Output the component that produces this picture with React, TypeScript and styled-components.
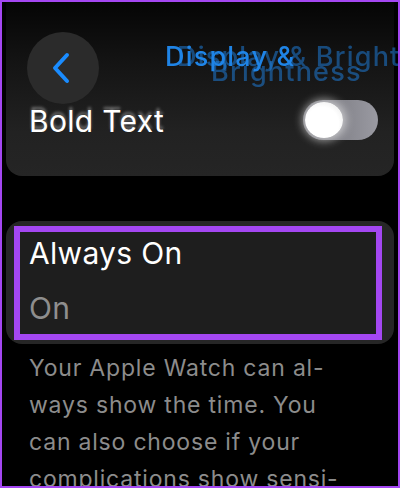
import { createGlobalStyle } from "styled-components"
import styled from "styled-components"

const GlobalStyle = createGlobalStyle`
    html, body {
        margin: 0;
        padding: 0;
        background: #000;
    }
    body {
        font-family: Inter, "Noto Sans", "DejaVu Sans", sans-serif;
    }
`

const Frame = styled.div`
    position: relative;
    box-sizing: border-box;
    width: 400px;
    height: 488px;
    overflow: hidden;
    border: 2px solid #a447f2;
    background: #000;
    display: flex;
    flex-direction: column;
    padding: 0 4px;
`

const Header = styled.div`
    position: absolute;
    top: 30px;
    left: 25px;
    right: 0;
    height: 72px;
    display: flex;
    align-items: center;
    gap: 66px;
    z-index: 2;
`

const BackButton = styled.button`
    width: 72px;
    height: 72px;
    flex: none;
    border: none;
    border-radius: 50%;
    background: #2b2b2b;
    display: flex;
    align-items: center;
    justify-content: center;
    padding: 0 4px 0 0;
`

const TitleStack = styled.div`
    position: relative;
    flex: 1;
    height: 72px;
    overflow: hidden;
`

const TitleLine = styled.div<{ $top: number; $left: number; $opacity: number }>`
    position: absolute;
    top: ${({ $top }) => $top}px;
    left: ${({ $left }) => $left}px;
    white-space: nowrap;
    font-size: 27px;
    font-weight: 500;
    letter-spacing: 1.2px;
    color: #1f84e6;
    opacity: ${({ $opacity }) => $opacity};
    filter: blur(0.4px);
`

const TopCard = styled.div`
    height: 174px;
    flex: none;
    border-radius: 0 0 16px 16px;
    background: linear-gradient(180deg, #050505 0%, #141414 35%, #222222 75%, #252525 100%);
    display: flex;
    align-items: flex-start;
    justify-content: space-between;
    padding: 98px 16px 0 23px;
    box-sizing: border-box;
`

const RowLabel = styled.div<{ $blur?: boolean }>`
    font-size: 30px;
    color: #fff;
    letter-spacing: 0.3px;
    margin-top: ${({ $blur }) => ($blur ? "3px" : "0")};
    text-shadow: ${({ $blur }) => ($blur ? "0 -3px 3px rgba(255,255,255,0.35)" : "none")};
`

const Toggle = styled.div`
    width: 75px;
    height: 40px;
    border-radius: 20px;
    background: linear-gradient(90deg, #6e6e74, #9a9aa2);
    display: flex;
    align-items: center;
    padding: 0 2px;
    box-sizing: border-box;
    filter: blur(0.6px);
`

const Knob = styled.div`
    width: 38px;
    height: 36px;
    border-radius: 50%;
    background: radial-gradient(circle at 45% 60%, #ffffff 55%, #e4e4e4 100%);
    box-shadow: 0 0 8px 3px rgba(255, 255, 255, 0.55);
`

const SettingCard = styled.div`
    margin-top: 45px;
    flex: none;
    border-radius: 16px;
    background: #262626;
    padding: 5px 12px 4px 8px;
`

const Highlight = styled.div`
    border: 6px solid #a447f2;
    background: #1e1e1e;
    height: 99px;
    padding: 3px 0 0 9px;
    display: flex;
    flex-direction: column;
`

const ValueLabel = styled.div`
    font-size: 30px;
    color: #8e8e8e;
    letter-spacing: 0.3px;
    margin-top: 19px;
`

const Description = styled.p`
    margin: 6px 0 0;
    padding: 0 8px 0 23px;
    font-size: 23px;
    line-height: 37px;
    letter-spacing: 0.8px;
    color: #8c8c8c;
    white-space: nowrap;
`

const Chevron = () => (
    <svg width="20" height="32" viewBox="0 0 20 32" fill="none">
        <path d="M16 3 L4 16 L16 29" stroke="#1a8cff" strokeWidth="4" strokeLinecap="round" strokeLinejoin="round" />
    </svg>
)

export default function App() {
    return (
        <>
            <GlobalStyle />
            <Frame>
                <Header>
                    <BackButton aria-label="Back">
                        <Chevron />
                    </BackButton>
                    <TitleStack>
                        <TitleLine $top={8} $left={12} $opacity={0.5}>Display &amp; Brightness</TitleLine>
                        <TitleLine $top={23} $left={46} $opacity={0.5}>Brightness</TitleLine>
                        <TitleLine $top={8} $left={0} $opacity={1}>Display &amp;</TitleLine>
                    </TitleStack>
                </Header>
                <TopCard>
                    <RowLabel $blur>Bold Text</RowLabel>
                    <Toggle>
                        <Knob />
                    </Toggle>
                </TopCard>
                <SettingCard>
                    <Highlight>
                        <RowLabel>Always On</RowLabel>
                        <ValueLabel>On</ValueLabel>
                    </Highlight>
                </SettingCard>
                <Description>
                    Your Apple Watch can al-
                    <br />
                    ways show the time. You
                    <br />
                    can also choose if your
                    <br />
                    complications show sensi-
                </Description>
            </Frame>
        </>
    )
}
